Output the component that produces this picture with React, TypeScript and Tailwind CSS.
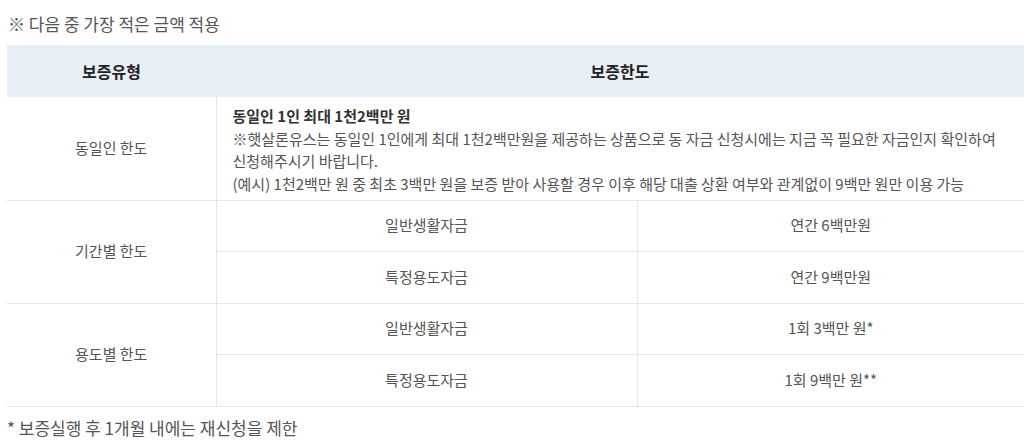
export default function App() {
  const font = { fontFamily: '"Noto Sans CJK KR", "Noto Sans", sans-serif' }

  return (
    <div className="h-[448px] w-[1024px] overflow-hidden bg-white pl-[7px] text-[#555]" style={font}>
      <p className="pt-[12px] pl-px text-[17px] leading-6">※ 다음 중 가장 적은 금액 적용</p>
      <table className="mt-[9px] w-[1017px] table-fixed border-collapse text-[15px]">
        <colgroup>
          <col className="w-[209px]" />
          <col className="w-[421px]" />
          <col />
        </colgroup>
        <thead>
          <tr className="h-[52px] bg-[#e9eff7] text-[16px] font-bold text-[#222]">
            <th>보증유형</th>
            <th colSpan={2}>보증한도</th>
          </tr>
        </thead>
        <tbody>
          <tr className="h-[103px] border-b border-[#e6e6e6]">
            <td className="border-r border-[#e6e6e6] text-center">동일인 한도</td>
            <td colSpan={2} className="pt-[4px] pl-4 align-middle leading-[22.5px]">
              <div className="font-bold text-[#333]">동일인 1인 최대 1천2백만 원</div>
              <div>
                ※햇살론유스는 동일인 1인에게 최대 1천2백만원을 제공하는 상품으로 동 자금 신청시에는 지금 꼭 필요한 자금인지 확인하여
                <br />
                신청해주시기 바랍니다.
              </div>
              <div className="whitespace-nowrap">
                (예시) 1천2백만 원 중 최초 3백만 원을 보증 받아 사용할 경우 이후 해당 대출 상환 여부와 관계없이 9백만 원만 이용 가능
              </div>
            </td>
          </tr>
          <tr className="h-[51px] border-b border-[#e6e6e6]">
            <td rowSpan={2} className="border-r border-[#e6e6e6] text-center">기간별 한도</td>
            <td className="border-r border-[#e6e6e6] text-center">일반생활자금</td>
            <td className="text-center">연간 6백만원</td>
          </tr>
          <tr className="h-[52px] border-b border-[#e6e6e6]">
            <td className="border-r border-[#e6e6e6] text-center">특정용도자금</td>
            <td className="text-center">연간 9백만원</td>
          </tr>
          <tr className="h-[51px] border-b border-[#e6e6e6]">
            <td rowSpan={2} className="border-r border-[#e6e6e6] text-center">용도별 한도</td>
            <td className="border-r border-[#e6e6e6] text-center">일반생활자금</td>
            <td className="text-center">1회 3백만 원*</td>
          </tr>
          <tr className="h-[52px] border-b border-[#e6e6e6]">
            <td className="border-r border-[#e6e6e6] text-center">특정용도자금</td>
            <td className="text-center">1회 9백만 원**</td>
          </tr>
        </tbody>
      </table>
      <p className="pt-[9px] text-[17px] leading-6">* 보증실행 후 1개월 내에는 재신청을 제한</p>
    </div>
  )
}
